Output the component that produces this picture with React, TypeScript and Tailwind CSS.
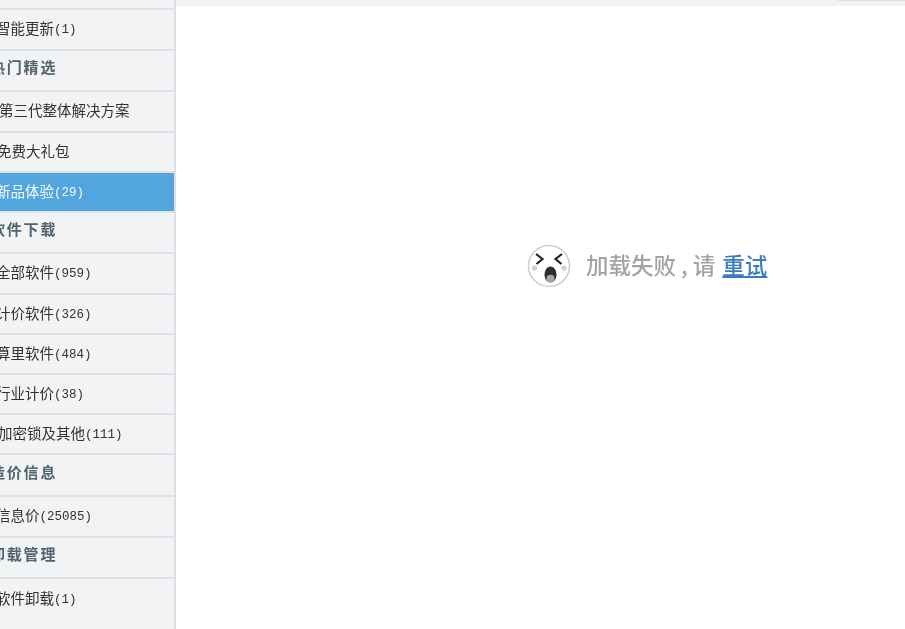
const fontCjk = { fontFamily: '"Noto Sans CJK SC", sans-serif' }

type Row = { label: string; count?: string; kind: 'item' | 'head' | 'active'; h: string; offset: string }

const rows: Row[] = [
  { label: '智能更新', count: '(1)', kind: 'item', h: 'h-[41px]', offset: 'ml-[-4px]' },
  { label: '热门精选', kind: 'head', h: 'h-[41px]', offset: 'ml-[-10px]' },
  { label: '第三代整体解决方案', kind: 'item', h: 'h-[41px]', offset: 'ml-[-1px]' },
  { label: '免费大礼包', kind: 'item', h: 'h-10', offset: 'ml-[-3px]' },
  { label: '新品体验', count: '(29)', kind: 'active', h: 'h-10', offset: 'ml-[-4px]' },
  { label: '软件下载', kind: 'head', h: 'h-[41px]', offset: 'ml-[-10px]' },
  { label: '全部软件', count: '(959)', kind: 'item', h: 'h-[41px]', offset: 'ml-[-4px]' },
  { label: '计价软件', count: '(326)', kind: 'item', h: 'h-10', offset: 'ml-[-4px]' },
  { label: '算里软件', count: '(484)', kind: 'item', h: 'h-10', offset: 'ml-[-4px]' },
  { label: '行业计价', count: '(38)', kind: 'item', h: 'h-10', offset: 'ml-[-4px]' },
  { label: '加密锁及其他', count: '(111)', kind: 'item', h: 'h-10', offset: 'ml-[-2px]' },
  { label: '造价信息', kind: 'head', h: 'h-[42px]', offset: 'ml-[-10px]' },
  { label: '信息价', count: '(25085)', kind: 'item', h: 'h-[41px]', offset: 'ml-[-4px]' },
  { label: '卸载管理', kind: 'head', h: 'h-[41px]', offset: 'ml-[-10px]' },
  { label: '软件卸载', count: '(1)', kind: 'item', h: 'h-[41px]', offset: 'ml-[-4px]' },
]

function SideRow({ row, last }: { row: Row; last: boolean }) {
  const active = row.kind === 'active'
  const head = row.kind === 'head'
  return (
    <div
      className={`${row.h} flex items-center overflow-hidden whitespace-nowrap ${last ? '' : 'border-b-2'} ${
        active ? 'bg-[#53a6dd] border-[#d5e6f2] text-[#f4f9fd]' : 'border-[#dde1e6] text-[#333]'
      } ${head ? 'text-[#50636f] font-bold' : ''}`}
    >
      <span
        className={`${row.offset} ${head ? 'mb-[6px] text-[15px] tracking-[1.8px]' : 'mb-[3px] text-[14.5px]'}`}
        style={fontCjk}
      >
        {row.label}
      </span>
      {row.count && <span className="mt-[2px] text-[12.5px] font-medium font-['Liberation_Mono',monospace]">{row.count}</span>}
    </div>
  )
}

function SadFace() {
  return (
    <svg width="44" height="44" viewBox="0 0 44 44" className="shrink-0">
      <circle cx="22" cy="22" r="20.5" fill="#fff" stroke="#cfcfcf" strokeWidth="1.6" />
      {/* eyes */}
      <path d="M9 10 L15.5 15 L9.5 20" fill="none" stroke="#222" strokeWidth="2.2" />
      <path d="M35 10 L28.5 15 L34.5 20" fill="none" stroke="#222" strokeWidth="2.2" />
      {/* tears */}
      <circle cx="7.5" cy="24" r="2.6" fill="#cfcfcf" />
      <circle cx="37" cy="24" r="2.6" fill="#cfcfcf" />
      {/* mouth */}
      <ellipse cx="23.5" cy="30.5" rx="6" ry="8" fill="#2e2e2e" />
      <ellipse cx="23.5" cy="34.5" rx="4" ry="3.8" fill="#a8a8a8" />
    </svg>
  )
}

export default function App() {
  return (
    <div className="h-screen w-full flex overflow-hidden bg-white blur-[0.4px]" style={fontCjk}>
      {/* sidebar */}
      <aside className="w-[176px] shrink-0 h-full bg-[#f1f3f5] border-r-2 border-[#dcdfe2] flex flex-col">
        <div className="h-[10px] shrink-0 border-b-2 border-[#dde1e6]" />
        {rows.map((row, i) => (
          <SideRow key={row.label} row={row} last={i === rows.length - 1} />
        ))}
      </aside>

      {/* main */}
      <main className="flex-1 flex flex-col">
        <div className="h-[6px] bg-[#f2f2f2] flex justify-end">
          <div className="w-[68px] h-px bg-[#e2e2e2]" />
        </div>
        <div className="pl-[351px] pt-[236px] flex items-center">
          <SadFace />
          <span className="ml-[15px] mb-1 text-[22.5px] leading-[44px] font-medium text-[#a3a3a3] whitespace-nowrap">
            加载失败 , 请
          </span>
          <a className="ml-[7px] mb-1 text-[22.5px] leading-[30px] font-medium text-[#3a7cc4] underline underline-offset-2 whitespace-nowrap">
            重试
          </a>
        </div>
      </main>
    </div>
  )
}
